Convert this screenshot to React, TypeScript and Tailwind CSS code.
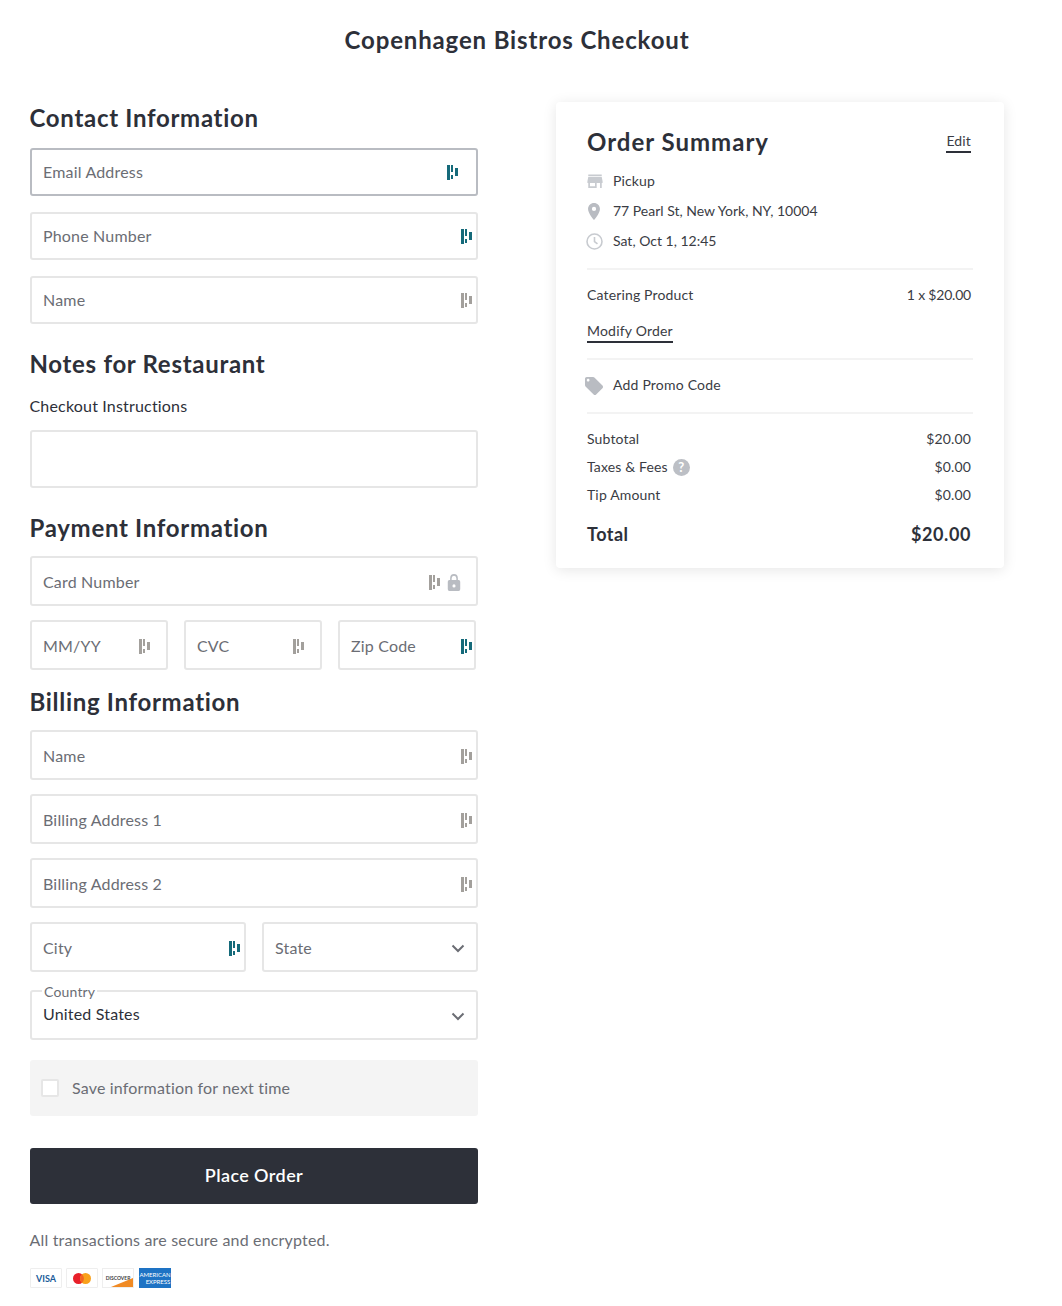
import React from "react";

const TEAL = "#156a7a";
const GREY = "#a3a09c";

function Dash({ color }: { color: string }) {
  return (
    <svg width="11" height="15" viewBox="0 0 11 15" className="shrink-0" fill={color}>
      <rect x="0" y="0" width="3" height="15" />
      <rect x="4" y="0" width="2" height="7" />
      <rect x="4" y="10" width="2" height="4" />
      <rect x="8" y="3" width="3" height="8" />
    </svg>
  );
}

function Field({
  label,
  icon,
  tall,
  pr = "pr-[4px]",
  className = "",
  lock,
  focus,
}: {
  label: string;
  icon: string;
  tall?: boolean;
  pr?: string;
  className?: string;
  lock?: boolean;
  focus?: boolean;
}) {
  return (
    <div
      className={`${tall ? "h-[50px] pt-[2px]" : "h-[48px]"} ${focus ? "border-[#b9bcc2]" : "border-[#e6e6e6]"} flex items-center justify-between rounded-[3px] border-2 pl-[11px] ${pr} ${className}`}
    >
      <span className="text-[16px] text-[#6b6d74]">{label}</span>
      <span className="flex items-center gap-[7px]">
        <Dash color={icon} />
        {lock && (
          <svg width="14" height="17" viewBox="0 0 18 20" preserveAspectRatio="none" fill="#b9bcc2">
            <path d="M15 7h-1V5A5 5 0 0 0 4 5v2H3a2 2 0 0 0-2 2v9a2 2 0 0 0 2 2h12a2 2 0 0 0 2-2V9a2 2 0 0 0-2-2zM9 16a2 2 0 1 1 0-4 2 2 0 0 1 0 4zm3-9H6V5a3 3 0 0 1 6 0v2z" />
          </svg>
        )}
      </span>
    </div>
  );
}

function Chevron({ className = "" }: { className?: string }) {
  return (
    <svg width="14" height="9" viewBox="0 0 14 9" fill="none" stroke="#6b6d74" strokeWidth="2" className={`shrink-0 ${className}`}>
      <path d="M1.5 1.5 7 7l5.5-5.5" />
    </svg>
  );
}

function Heading({ children, className = "" }: { children: React.ReactNode; className?: string }) {
  return (
    <h2 className={`ml-[-0.5px] text-[24px] leading-[32px] font-bold tracking-[0.7px] text-[#2d3039] ${className}`}>
      {children}
    </h2>
  );
}

function Row({ label, value, children }: { label: string; value: string; children?: React.ReactNode }) {
  return (
    <div className="flex h-[28px] items-center justify-between text-[14px] tracking-[0.15px] text-[#3a3c44]">
      <span className="flex items-center gap-[5px]">
        <span className="pb-[2px]">{label}</span>
        {children}
      </span>
      <span className="pb-[2px]">{value}</span>
    </div>
  );
}

function InfoRow({ icon, text, tight }: { icon: React.ReactNode; text: string; tight?: boolean }) {
  return (
    <div className={`flex h-[30px] items-center text-[14px] text-[#3a3c44] ${tight ? "tracking-[0px]" : "tracking-[0.15px]"}`}>
      <span className="flex w-[26px] shrink-0 items-center">{icon}</span>
      <span className="pb-[2px]">{text}</span>
    </div>
  );
}

function PayCard({ children }: { children: React.ReactNode }) {
  return (
    <div className="flex h-[20px] w-[32px] items-center justify-center overflow-hidden rounded-[1px] border border-[#eeeeee] bg-white">
      {children}
    </div>
  );
}

export default function App() {
  return (
    <div className="h-[1306px] overflow-hidden bg-white pl-[30px] font-['Lato',sans-serif] tracking-[0.18px] text-[#2d3039]">
      <h1 className="w-[974px] pt-[24px] text-center text-[24px] leading-[32px] font-bold tracking-[0.85px]">
        Copenhagen Bistros Checkout
      </h1>

      <div className="mt-[46px] flex items-start gap-[78px]">
        <main className="w-[448px]">
          <Heading>Contact Information</Heading>
          <div className="mt-[14px] flex flex-col gap-[16px]">
            <Field label="Email Address" icon={TEAL} pr="pr-[18px]" focus />
            <Field label="Phone Number" icon={TEAL} />
            <Field label="Name" icon={GREY} />
          </div>

          <Heading className="mt-[24px]">Notes for Restaurant</Heading>
          <div className="mt-[14px] ml-[-0.5px] text-[16px] leading-[24px] text-[#2d3039]">Checkout Instructions</div>
          <div className="mt-[12px] h-[58px] rounded-[3px] border-2 border-[#e6e6e6]" />

          <Heading className="mt-[24px]">Payment Information</Heading>
          <div className="mt-[12px] flex flex-col gap-[14px]">
            <Field label="Card Number" icon={GREY} tall pr="pr-[15px]" lock />
            <div className="flex gap-[16px]">
              <Field label="MM/YY" icon={GREY} tall pr="pr-[16px]" className="w-[138px]" />
              <Field label="CVC" icon={GREY} tall pr="pr-[16px]" className="w-[138px]" />
              <Field label="Zip Code" icon={TEAL} tall pr="pr-[2px]" className="w-[138px]" />
            </div>
          </div>

          <Heading className="mt-[16px]">Billing Information</Heading>
          <div className="mt-[12px] flex flex-col gap-[14px]">
            <Field label="Name" icon={GREY} tall />
            <Field label="Billing Address 1" icon={GREY} tall />
            <Field label="Billing Address 2" icon={GREY} tall />
            <div className="flex gap-[16px]">
              <Field label="City" icon={TEAL} tall className="w-[216px]" />
              <div className="flex h-[50px] w-[216px] items-center justify-between rounded-[3px] border-2 border-[#e6e6e6] pt-[2px] pr-[11px] pl-[11px]">
                <span className="text-[16px] text-[#6b6d74]">State</span>
                <Chevron />
              </div>
            </div>
          </div>

          <div className="relative mt-[18px] flex h-[50px] items-center justify-between rounded-[3px] border-2 border-[#e6e6e6] pr-[11px] pl-[11px]">
            <span className="absolute top-[-8px] left-[10px] bg-white px-[2px] text-[14px] leading-[16px] text-[#6b6d74]">
              Country
            </span>
            <span className="pb-[2px] text-[16px] text-[#2d3039]">United States</span>
            <Chevron className="mt-[2px]" />
          </div>

          <div className="mt-[20px] flex h-[56px] items-center rounded-[3px] bg-[#f4f4f4] pl-[11px]">
            <span className="h-[18px] w-[18px] rounded-[2px] border-2 border-[#e6e6e6] bg-white" />
            <span className="ml-[13px] text-[16px] text-[#6b6d74]">Save information for next time</span>
          </div>

          <button className="mt-[32px] h-[56px] w-full rounded-[3px] bg-[#2d3039] pb-[2px] text-[18px] font-semibold tracking-[0.4px] text-white">
            Place Order
          </button>

          <p className="mt-[24px] ml-[-0.5px] text-[16px] leading-[24px] text-[#6b6d74]">
            All transactions are secure and encrypted.
          </p>

          <div className="mt-[16px] flex gap-[4px]">
            <PayCard>
              <span className="text-[9px] leading-none font-bold tracking-normal text-[#1a5b99]">VISA</span>
            </PayCard>
            <PayCard>
              <svg width="18" height="11" viewBox="0 0 18 11">
                <circle cx="5.5" cy="5.5" r="5.5" fill="#e8202a" />
                <circle cx="12.5" cy="5.5" r="5.5" fill="#f9a11b" />
                <path d="M9 1.3a5.5 5.5 0 0 1 0 8.4 5.5 5.5 0 0 1 0-8.4z" fill="#f26522" />
              </svg>
            </PayCard>
            <div className="relative flex h-[20px] w-[32px] items-center justify-center overflow-hidden border border-[#eeeeee] bg-white">
              <span className="text-[5px] leading-none font-bold tracking-normal text-[#444444]">DISCOVER</span>
              <svg className="absolute right-0 bottom-0" width="22" height="9" viewBox="0 0 22 9">
                <path d="M0 9 22 0v9z" fill="#f08a24" />
              </svg>
            </div>
            <div className="ml-[1px] flex h-[20px] w-[32px] flex-col items-center justify-center bg-[#1e73c4] text-[6px] leading-[7px] font-normal tracking-normal whitespace-nowrap text-white">
              <span>AMERICAN</span>
              <span className="pl-[6px]">EXPRESS</span>
            </div>
          </div>
        </main>

        <aside className="h-[466px] w-[448px] rounded-[4px] bg-white px-[31px] pt-[24px] shadow-[0_2px_14px_rgba(0,0,0,0.1)]">
          <div className="flex items-start justify-between">
            <h2 className="text-[24px] leading-[32px] font-bold tracking-[1px] text-[#2d3039]">Order Summary</h2>
            <a className="mt-[6px] mr-[2px] border-b-2 border-[#2d3039] pb-[1px] text-[14px] leading-[18px] tracking-[0.15px] text-[#3a3c44]">
              Edit
            </a>
          </div>
          <div className="mt-[8px]">
            <InfoRow
              text="Pickup"
              icon={
                <svg width="16" height="16" viewBox="2.5 3 19 17.5" fill="#c8cbd0">
                  <path d="M20 4H4v2h16V4zm1 10v-2l-1-5H4l-1 5v2h1v6h10v-6h4v6h2v-6h1zm-9 4H6v-4h6v4z" />
                </svg>
              }
            />
            <InfoRow
              tight
              text="77 Pearl St, New York, NY, 10004"
              icon={
                <svg width="14" height="17" viewBox="5 2 14 20" fill="#b9bcc2">
                  <path d="M12 2C8.13 2 5 5.13 5 9c0 5.25 7 13 7 13s7-7.75 7-13c0-3.87-3.13-7-7-7zm0 9.5a2.5 2.5 0 0 1 0-5 2.5 2.5 0 0 1 0 5z" />
                </svg>
              }
            />
            <InfoRow
              text="Sat, Oct 1, 12:45"
              tight
              icon={
                <svg width="17" height="17" viewBox="0 0 17 17" fill="none" stroke="#c8cbd0" strokeWidth="1.6" className="ml-[-1px]">
                  <circle cx="8.5" cy="8.5" r="7.5" />
                  <path d="M8.5 4v4.5l3 2.4" />
                </svg>
              }
            />
          </div>
          <div className="mt-[12px] h-[2px] bg-[#f3f3f3]" />
          <div className="mt-[15px] flex h-[20px] items-center justify-between pr-[2px] pb-[2px] text-[14px] tracking-[0.15px] text-[#3a3c44]">
            <span>Catering Product</span>
            <span className="tracking-[-0.2px]">1 x $20.00</span>
          </div>
          <div className="mt-[13px]">
            <span className="inline-block border-b-2 border-[#2d3039] pb-[1px] text-[14px] leading-[18px] tracking-[0.2px] text-[#3a3c44]">
              Modify Order
            </span>
          </div>
          <div className="mt-[15px] h-[2px] bg-[#f3f3f3]" />
          <div className="flex h-[52px] items-center text-[14px] tracking-[0.2px] text-[#3a3c44]">
            <span className="flex w-[26px] shrink-0">
              <svg width="18" height="18" viewBox="2 2 20 20" fill="#b9bcc2" className="ml-[-2px]">
                <path d="M21.41 11.58l-9-9C12.05 2.22 11.55 2 11 2H4c-1.1 0-2 .9-2 2v7c0 .55.22 1.05.59 1.42l9 9c.36.36.86.58 1.41.58.55 0 1.05-.22 1.41-.59l7-7c.37-.36.59-.86.59-1.41 0-.55-.23-1.06-.59-1.42zM5.5 7C4.67 7 4 6.33 4 5.5S4.67 4 5.5 4 7 4.67 7 5.5 6.33 7 5.5 7z" />
              </svg>
            </span>
            <span className="pb-[3px]">Add Promo Code</span>
          </div>
          <div className="h-[2px] bg-[#f3f3f3]" />
          <div className="mt-[11px] pr-[2px]">
            <Row label="Subtotal" value="$20.00" />
            <Row label="Taxes & Fees" value="$0.00">
              <span className="flex h-[17px] w-[17px] items-center justify-center rounded-full bg-[#bcbfc5] text-[13px] leading-none font-bold tracking-normal text-white">
                ?
              </span>
            </Row>
            <Row label="Tip Amount" value="$0.00" />
          </div>
          <div className="mt-[11px] flex h-[28px] items-center justify-between pr-[2px] text-[18px] font-bold tracking-[0.5px] text-[#2d3039]">
            <span>Total</span>
            <span className="tracking-[0.6px]">$20.00</span>
          </div>
        </aside>
      </div>
    </div>
  );
}
